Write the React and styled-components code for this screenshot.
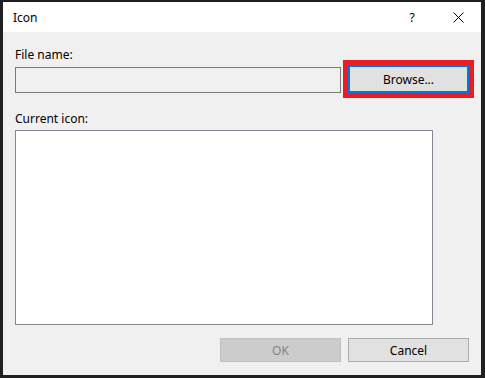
import styled, { createGlobalStyle } from "styled-components";

const Global = createGlobalStyle`
  html, body {
    margin: 0;
    padding: 0;
    background: #202020;
  }
  * {
    box-sizing: border-box;
  }
`;

const Frame = styled.div`
  width: 485px;
  height: 378px;
  padding: 2px 4px 3px 3px;
  background: #202020;
  display: flex;
`;

const Window = styled.div`
  flex: 1;
  display: flex;
  flex-direction: column;
  background: #f0f0f0;
  font-family: "Segoe UI", "Noto Sans", sans-serif;
  font-size: 12px;
  color: #000000;
`;

const TitleBar = styled.div`
  height: 30px;
  background: #ffffff;
  display: flex;
  align-items: center;
  padding-left: 10px;
`;

const Title = styled.span`
  flex: 1;
  font-size: 12px;
`;

const CaptionButton = styled.div`
  width: 46px;
  height: 30px;
  display: flex;
  align-items: center;
  justify-content: center;
  font-size: 12px;
`;

const Body = styled.div`
  flex: 1;
  display: flex;
  flex-direction: column;
  padding: 15px 12px 13px 12px;
`;

const Label = styled.div`
  line-height: 16px;
  height: 16px;
  margin-bottom: ${(p) => p.$gap}px;
  margin-top: ${(p) => p.$top || 0}px;
`;

const Row = styled.div`
  display: flex;
  align-items: flex-end;
  gap: 7px;
`;

const TextBox = styled.div`
  width: 326px;
  height: 26px;
  border: 1px solid #7a7a7a;
  background: #f0f0f0;
`;

const Button = styled.button`
  width: 121px;
  height: ${(p) => p.$height || 24}px;
  font-family: inherit;
  font-size: 12px;
  padding: 0;
  background: ${(p) => (p.disabled ? "#cccccc" : "#e1e1e1")};
  color: ${(p) => (p.disabled ? "#838383" : "#000000")};
  border: ${(p) => (p.$focused ? "2px solid #0078d7" : p.disabled ? "1px solid #bfbfbf" : "1px solid #adadad")};
  outline: ${(p) => (p.$marked ? "5px solid #ed1c24" : "none")};
  outline-offset: 0;
`;

const ListBox = styled.div`
  width: 418px;
  height: 195px;
  background: #ffffff;
  border: 1px solid #828790;
`;

const Footer = styled.div`
  margin-top: 13px;
  display: flex;
  justify-content: flex-end;
  gap: 7px;
`;

export default function App() {
  return (
    <>
      <Global />
      <Frame>
        <Window>
          <TitleBar>
            <Title>Icon</Title>
            <CaptionButton>?</CaptionButton>
            <CaptionButton>
              <svg width="11" height="11" viewBox="0 0 11 11">
                <path d="M0.5 0.5 L10.5 10.5 M10.5 0.5 L0.5 10.5" stroke="#000" strokeWidth="1" fill="none" />
              </svg>
            </CaptionButton>
          </TitleBar>
          <Body>
            <Label $gap={2}>File name:</Label>
            <Row>
              <TextBox />
              <Button $height={28} $focused $marked>Browse...</Button>
            </Row>
            <Label $top={18} $gap={3}>Current icon:</Label>
            <ListBox />
            <Footer>
              <Button disabled>OK</Button>
              <Button>Cancel</Button>
            </Footer>
          </Body>
        </Window>
      </Frame>
    </>
  );
}
